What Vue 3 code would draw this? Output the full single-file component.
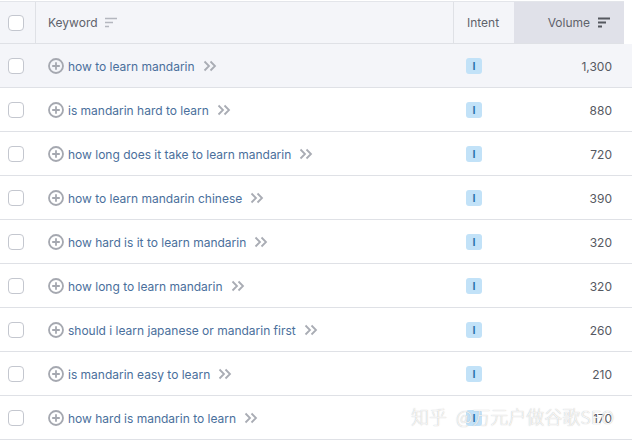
<script setup>
const rows = [
  ['how to learn mandarin', '1,300'],
  ['is mandarin hard to learn', '880'],
  ['how long does it take to learn mandarin', '720'],
  ['how to learn mandarin chinese', '390'],
  ['how hard is it to learn mandarin', '320'],
  ['how long to learn mandarin', '320'],
  ['should i learn japanese or mandarin first', '260'],
  ['is mandarin easy to learn', '210'],
  ['how hard is mandarin to learn', '170'],
]
</script>

<template>
  <div class="page">
    <div class="head">
      <div class="c-check divided"><span class="box"></span></div>
      <div class="c-key head-key">
        <span>Keyword</span>
        <svg width="14" height="11" viewBox="0 0 14 11" class="sort-light">
          <path d="M1 1.5h12M1 5.5h8M1 9.5h4" />
        </svg>
      </div>
      <div class="c-intent divided-left">Intent</div>
      <div class="c-volume head-vol">
        <span>Volume</span>
        <svg width="14" height="11" viewBox="0 0 14 11" class="sort-dark">
          <path d="M1 1.5h12M1 5.5h8M1 9.5h4" />
        </svg>
      </div>
    </div>
    <div v-for="(r, i) in rows" :key="r[0]" class="row" :class="{ first: i === 0 }">
      <div class="c-check"><span class="box"></span></div>
      <div class="c-key">
        <svg class="plus" width="16" height="16" viewBox="0 0 16 16">
          <circle cx="8" cy="8" r="7" />
          <path d="M8 4.2v7.6M4.2 8h7.6" />
        </svg>
        <a class="kw">{{ r[0] }}</a>
        <svg class="chev" width="14" height="12" viewBox="0 0 14 12">
          <path d="M1.5 1.5 6 6l-4.500 4.500M7.500 1.500 12 6l-4.500 4.500" />
        </svg>
      </div>
      <div class="c-intent"><span class="badge">I</span></div>
      <div class="c-volume num">{{ r[1] }}</div>
    </div>
    <div class="mark">知乎 @万元户做谷歌SEO</div>
  </div>
</template>

<style>
html, body { margin: 0; background: #fff; overflow: hidden; }
</style>

<style scoped>
.page {
  position: relative;
  width: 632px;
  height: 443px;
  overflow: hidden;
  padding-top: 1px;
  box-sizing: border-box;
  background: #fff;
  font-family: Inter, "Noto Sans CJK SC", sans-serif;
  font-size: 12px;
  color: #333;
}
.head, .row {
  display: flex;
  align-items: center;
  box-sizing: border-box;
  border-bottom: 1px solid #dfe1e6;
}
.head {
  height: 43px;
  border-top: 1px solid #e3e5ea;
  background: #f4f5f9;
  align-items: stretch;
  margin-right: 8px;
  color: #5f626b;
}
.row { height: 44px; }
.row.first { background: #f4f5f9; }
.c-check {
  width: 36px;
  flex: none;
  box-sizing: border-box;
  display: flex;
  align-items: center;
  padding-left: 8px;
}
.divided { border-right: 1px solid #dfe1e6; }
.box {
  width: 16px;
  height: 16px;
  box-sizing: border-box;
  border: 1px solid #c4c7cf;
  border-radius: 4px;
  background: #fff;
}
.c-key {
  width: 417px;
  flex: none;
  box-sizing: border-box;
  display: flex;
  align-items: center;
  padding-left: 12px;
}
.head-key { gap: 6px; }
.sort-light path { stroke: #b4b7bf; stroke-width: 1.400; fill: none; }
.sort-dark path { stroke: #55585f; stroke-width: 1.800; fill: none; }
.plus { flex: none; margin-right: 4px; }
.plus circle { fill: none; stroke: #a5a8b0; stroke-width: 1.800; }
.plus path { stroke: #a5a8b0; stroke-width: 1.800; fill: none; }
.kw { color: #4a6f9c; white-space: nowrap; letter-spacing: -0.005px; padding-top: 2px; }
.chev { flex: none; margin-left: 8px; }
.chev path { stroke: #a9acb4; stroke-width: 1.800; fill: none; }
.c-intent {
  width: 61px;
  flex: none;
  box-sizing: border-box;
  display: flex;
  align-items: center;
  padding-left: 13px;
}
.divided-left { border-left: 1px solid #dfe1e6; }
.badge {
  width: 16px;
  height: 16px;
  border-radius: 3px;
  background: #c2e2f8;
  color: #1f6fa8;
  font-size: 11px;
  font-weight: 600;
  display: flex;
  align-items: center;
  justify-content: center;
}
.c-volume {
  flex: 1;
  display: flex;
  align-items: center;
  justify-content: flex-end;
}
.head-vol {
  background: #e0e1e9;
  gap: 7px;
  padding-right: 13px;
}
.num { padding-right: 20px; color: #565962; padding-top: 1px; }
.mark {
  position: absolute;
  left: 411px;
  top: 404px;
  font-family: "Noto Sans CJK SC", sans-serif;
  font-size: 18px;
  font-weight: 300;
  line-height: 24px;
  word-spacing: 5px;
  white-space: nowrap;
  color: rgba(255, 255, 255, 0.9);
  text-shadow: 0 0 1px rgba(150, 150, 150, 0.8);
}
</style>
